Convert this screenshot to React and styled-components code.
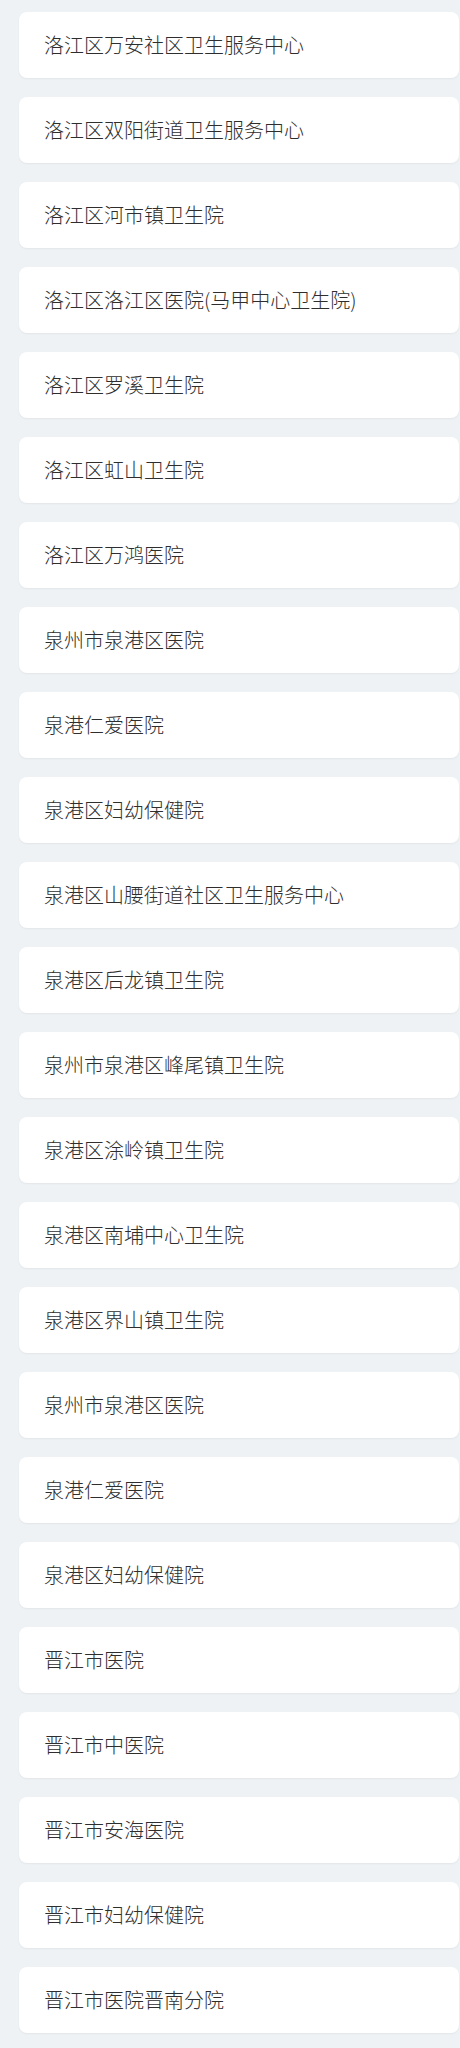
import React from "react";
import styled, { createGlobalStyle } from "styled-components";

const hospitals = [
  "洛江区万安社区卫生服务中心",
  "洛江区双阳街道卫生服务中心",
  "洛江区河市镇卫生院",
  "洛江区洛江区医院(马甲中心卫生院)",
  "洛江区罗溪卫生院",
  "洛江区虹山卫生院",
  "洛江区万鸿医院",
  "泉州市泉港区医院",
  "泉港仁爱医院",
  "泉港区妇幼保健院",
  "泉港区山腰街道社区卫生服务中心",
  "泉港区后龙镇卫生院",
  "泉州市泉港区峰尾镇卫生院",
  "泉港区涂岭镇卫生院",
  "泉港区南埔中心卫生院",
  "泉港区界山镇卫生院",
  "泉州市泉港区医院",
  "泉港仁爱医院",
  "泉港区妇幼保健院",
  "晋江市医院",
  "晋江市中医院",
  "晋江市安海医院",
  "晋江市妇幼保健院",
  "晋江市医院晋南分院",
];

const GlobalStyle = createGlobalStyle`
  html, body {
    margin: 0;
    padding: 0;
    background: #eef2f5;
  }
  body {
    font-family: "Liberation Sans", "Noto Sans CJK SC", sans-serif;
  }
`;

const App = () => {
  return (
    <>
      <GlobalStyle />
      <List>
        {hospitals.map((name, index) => (
          <Card key={index}>
            <Name>{name}</Name>
          </Card>
        ))}
      </List>
    </>
  );
};

const List = styled.div`
  display: flex;
  flex-direction: column;
  gap: 19px;
  padding: 12px 1px 15px 19px;
  background: #eef2f5;
`;

const Card = styled.div`
  display: flex;
  align-items: center;
  height: 66px;
  box-sizing: border-box;
  padding: 0 25px;
  background: #ffffff;
  border-radius: 8px;
  box-shadow: 0 1px 2px rgba(0, 0, 0, 0.05);
`;

const Name = styled.span`
  font-family: "Noto Sans CJK SC", "Liberation Sans", sans-serif;
  font-size: 20px;
  font-weight: 300;
  color: #2e2e2e;
  line-height: 1;
`;

export default App;
